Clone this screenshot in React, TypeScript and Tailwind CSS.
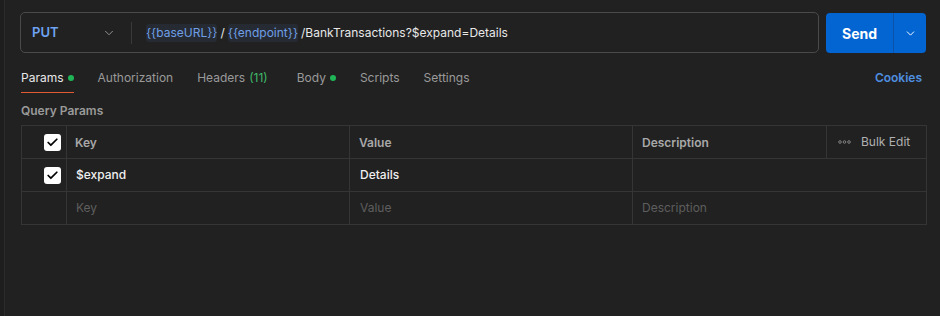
import { ChevronDown, Check } from 'lucide-react';

const tabs = [
  { label: 'Params', dot: true, active: true },
  { label: 'Authorization' },
  { label: 'Headers', count: '(11)' },
  { label: 'Body', dot: true },
  { label: 'Scripts' },
  { label: 'Settings' },
];

const Checkbox = () => (
  <div className="w-[17px] h-[17px] rounded-[3px] bg-white flex items-center justify-center">
    <Check className="w-[13px] h-[13px] text-black" strokeWidth={3.2} />
  </div>
);

const App = () => {
  return (
    <div
      className="relative w-[940px] h-[316px] bg-[#212121] overflow-hidden text-[12px]"
      style={{ fontFamily: 'Inter, "Noto Sans", sans-serif' }}
    >
      {/* left pane edge */}
      <div className="absolute left-0 top-0 bottom-0 w-[5px] bg-[#1e1e1e] border-r border-[#2c2c2c]" />

      <div className="pl-[20px] pr-[14px] pt-[12px]">
        {/* URL bar */}
        <div className="flex gap-[7px]">
          <div className="flex-1 h-[41px] border border-[#4a4a4a] rounded-[5px] flex items-center">
            <div className="w-[110px] pl-[11px] pr-[15px] flex items-center justify-between">
              <span className="text-[#6ea2f2] font-semibold text-[13px]">PUT</span>
              <ChevronDown className="w-[14px] h-[14px] text-[#9a9a9a]" strokeWidth={1.6} />
            </div>
            <div className="w-px h-[22px] bg-[#3a3a3a] mr-[14px]" />
            <div className="flex items-center text-[#e8e8e8] whitespace-nowrap">
              <span className="bg-[#262b33] text-[#6f9fe6] rounded-[3px]">{'{{baseURL}}'}</span>
              <span className="px-[3px]">/</span>
              <span className="bg-[#262b33] text-[#6f9fe6] rounded-[3px]">{'{{endpoint}}'}</span>
              <span className="pl-[3px]">/BankTransactions?$expand=Details</span>
            </div>
          </div>
          <div className="w-[100px] h-[40px] mt-[1px] rounded-[4px] bg-[#0265d2] flex text-white">
            <div className="w-[67px] flex items-center justify-center font-bold text-[14px]">Send</div>
            <div className="w-px bg-[#0b52a8]" />
            <div className="flex-1 flex items-center justify-center">
              <ChevronDown className="w-[13px] h-[13px]" strokeWidth={1.8} />
            </div>
          </div>
        </div>

        {/* Tabs */}
        <div className="flex items-center justify-between mt-[11px] ml-[1px]">
          <div className="flex items-center gap-[24px]">
            {tabs.map((t) => (
              <div
                key={t.label}
                className={`relative h-[28px] flex items-center gap-[4px] ${t.active ? 'text-[#e8e8e8]' : 'text-[#9a9a9a]'}`}
              >
                <span>{t.label}</span>
                {t.count && <span className="text-[#3fb967] mr-[5px]">{t.count}</span>}
                {t.dot && <span className="w-[6px] h-[6px] rounded-full bg-[#1fb556]" />}
                {t.active && <div className="absolute left-0 right-0 -bottom-[1px] h-px bg-[#e05a33]" />}
              </div>
            ))}
          </div>
          <span className="text-[#4f8fe0] font-semibold pr-[4px]">Cookies</span>
        </div>

        {/* Query Params */}
        <div className="mt-[10px] ml-[1px] text-[#9a9a9a] font-semibold">Query Params</div>
        <div className="mt-[5px] ml-[1px] w-[906px] border border-[#353535]">
          <div className="grid grid-cols-[44px_283px_283px_194px_1fr] h-[33px] border-b border-[#353535]">
            <div className="flex items-center justify-end pr-[5px]">
              <Checkbox />
            </div>
            <div className="border-l border-[#353535] flex items-center pl-[8px] pt-[1px] text-[#a8a8a8] font-semibold">Key</div>
            <div className="border-l border-[#353535] flex items-center pl-[9px] pt-[1px] text-[#a8a8a8] font-semibold">Value</div>
            <div className="border-l border-[#353535] flex items-center pl-[9px] pt-[1px] text-[#a8a8a8] font-semibold">Description</div>
            <div className="border-l border-[#353535] flex items-center pl-[11px] gap-[10px] text-[#b0b0b0]">
              <svg width="13" height="4" viewBox="0 0 13 4" className="text-[#8a8a8a]">
                <circle cx="2" cy="2" r="1.3" fill="none" stroke="currentColor" strokeWidth="0.9" />
                <circle cx="6.5" cy="2" r="1.3" fill="none" stroke="currentColor" strokeWidth="0.9" />
                <circle cx="11" cy="2" r="1.3" fill="none" stroke="currentColor" strokeWidth="0.9" />
              </svg>
              <span>Bulk Edit</span>
            </div>
          </div>
          <div className="grid grid-cols-[44px_283px_283px_1fr] h-[33px] border-b border-[#353535]">
            <div className="flex items-center justify-end pr-[5px]">
              <Checkbox />
            </div>
            <div className="border-l border-[#353535] flex items-center pl-[9px] text-[#f0f0f0] font-medium">$expand</div>
            <div className="border-l border-[#353535] flex items-center pl-[10px] text-[#f0f0f0] font-medium">Details</div>
            <div className="border-l border-[#353535]" />
          </div>
          <div className="grid grid-cols-[44px_283px_283px_1fr] h-[32px]">
            <div />
            <div className="border-l border-[#353535] flex items-center pl-[9px] text-[#5e5e5e]">Key</div>
            <div className="border-l border-[#353535] flex items-center pl-[10px] text-[#5e5e5e]">Value</div>
            <div className="border-l border-[#353535] flex items-center pl-[9px] text-[#5e5e5e]">Description</div>
          </div>
        </div>
      </div>
    </div>
  );
};

export default App;
